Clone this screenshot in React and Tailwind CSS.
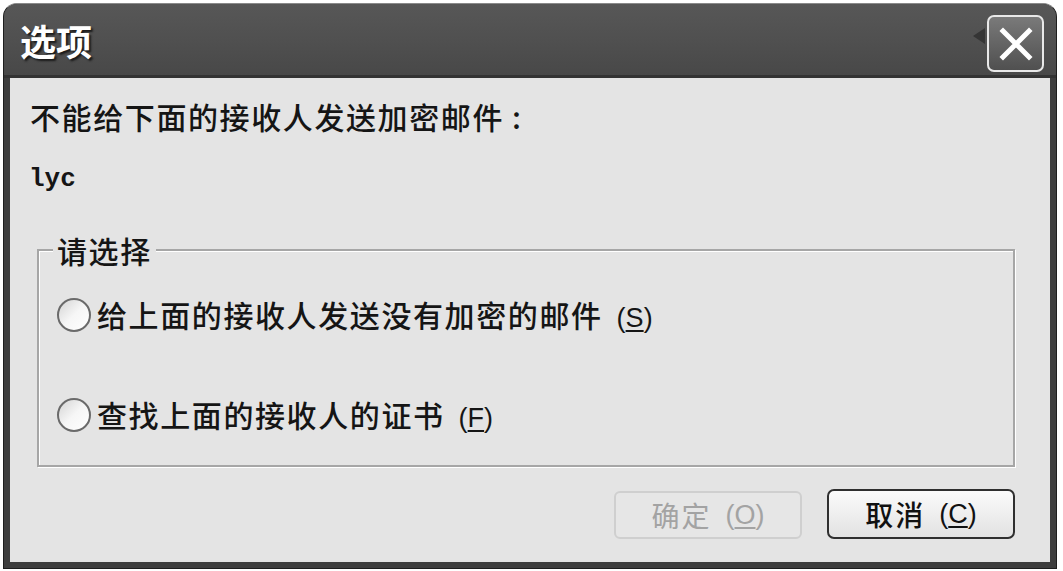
import React from "react";

const CJK = { fontFamily: '"Noto Sans CJK SC", "Noto Sans", sans-serif' };

function Mn({ ch }) {
  return (
    <span className="ml-[14px] text-[27px]" style={{ fontFamily: '"Liberation Sans", sans-serif', letterSpacing: 0 }}>
      (<span className="underline underline-offset-[3px] decoration-[2px]">{ch}</span>)
    </span>
  );
}

function Radio() {
  return (
    <span className="w-[34px] h-[34px] rounded-full border-[2px] border-[#6a6a6a] bg-gradient-to-br from-[#d4d4d4] via-[#f6f6f6] to-[#ffffff] shrink-0" />
  );
}

export default function App() {
  return (
    <div className="w-[1063px] h-[571px] bg-white pt-[3px] pl-[3px]" style={CJK}>
      <div className="w-[1054px] h-[566px] flex flex-col rounded-t-[14px] bg-[#3e3e3e] border border-[#1e1e1e] border-t-[#8a8a8a]">
        {/* title bar */}
        <div className="h-[74px] flex items-center pl-[16px] pr-[12px] border-b-[3px] border-[#333333] bg-gradient-to-b from-[#575757] via-[#505050] to-[#484848] rounded-t-[13px]">
          <span className="text-white text-[36px] font-bold leading-none" style={{ textShadow: "2px 2px 2px #1a1a1a" }}>选项</span>
          <div className="flex-1" />
          <svg width="12" height="16" viewBox="0 0 12 16" className="mr-[2px] -mt-[8px]"><path d="M12 0 L0 8 L12 16 Z" fill="#353535" /></svg>
          <div className="w-[57px] h-[57px] rounded-[7px] border-[2px] border-[#e8e8e8] bg-gradient-to-b from-[#7a7a7a] to-[#505050] flex items-center justify-center mt-[8px]">
            <svg width="34" height="34" viewBox="0 0 34 34">
              <path d="M4 4 L30 30 M30 4 L4 30" stroke="#ffffff" strokeWidth="5" strokeLinecap="square" />
            </svg>
          </div>
        </div>
        {/* body */}
        <div className="flex-1 mx-[6px] mb-[6px] bg-[#e4e4e4] flex flex-col text-[#151515]">
          <div className="pl-[20px] pt-[23px] text-[30px] font-medium leading-none tracking-[1.6px]">
            不能给下面的接收人发送加密邮件<span className="ml-[8px]">:</span>
          </div>
          <div className="pl-[19px] mt-[35px] text-[26px] font-bold leading-none" style={{ fontFamily: '"Liberation Mono", monospace' }}>
            lyc
          </div>
          {/* group box */}
          <div className="ml-[27px] mt-[57px] w-[978px] h-[218px] border-[2px] border-[#a6a6a6] relative flex flex-col" style={{ boxShadow: "inset 1px 1px 0 #ffffff, 1px 1px 0 #ffffff" }}>
            <span className="absolute left-[14px] -top-[19px] bg-[#e4e4e4] px-[4px] text-[30px] font-medium leading-[36px] tracking-[1.6px]">请选择</span>
            <div className="flex items-center gap-[6px] pl-[18px] mt-[47px] text-[30px] font-medium leading-none tracking-[1.6px]">
              <Radio />
              <span>给上面的接收人发送没有加密的邮件<Mn ch="S" /></span>
            </div>
            <div className="flex items-center gap-[6px] pl-[18px] mt-[66px] text-[30px] font-medium leading-none tracking-[1.6px]">
              <Radio />
              <span>查找上面的接收人的证书<Mn ch="F" /></span>
            </div>
          </div>
          {/* buttons */}
          <div className="flex justify-end gap-[25px] pr-[35px] mt-[24px]">
            <div className="w-[188px] h-[48px] rounded-[6px] border-[2px] border-[#cfcfcf] bg-[#e6e6e6] flex items-center justify-center text-[28px] text-[#a3a3a3] tracking-[2px] leading-none">
              确定<Mn ch="O" />
            </div>
            <div className="w-[188px] h-[50px] -mt-[2px] rounded-[7px] border-[2px] border-[#2f2f2f] bg-gradient-to-b from-[#fbfbfb] to-[#e2e2e2] flex items-center justify-center text-[28px] text-[#111] font-medium tracking-[2px] leading-none">
              取消<Mn ch="C" />
            </div>
          </div>
        </div>
      </div>
    </div>
  );
}
